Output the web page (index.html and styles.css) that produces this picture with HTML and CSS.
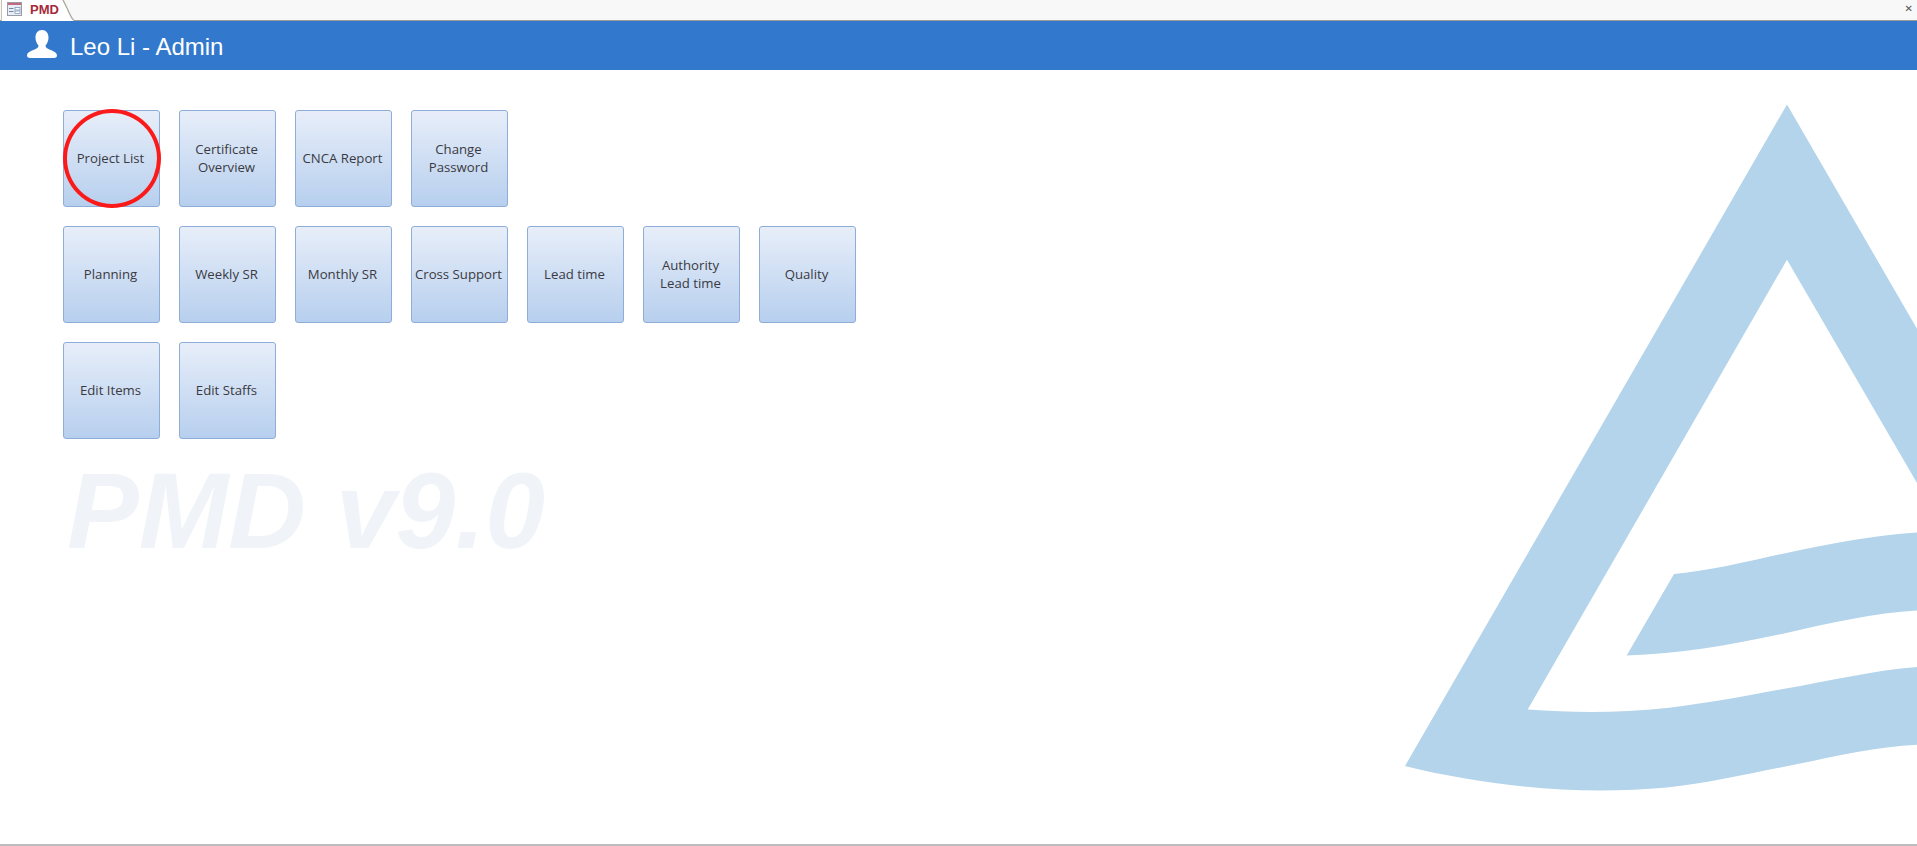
FILE: index.html
```html
<!DOCTYPE html>
<html lang="en">
<head>
<meta charset="utf-8">
<title>PMD</title>
<link rel="stylesheet" href="styles.css">
</head>
<body>
<svg class="logo" viewBox="0 0 1917 846" aria-hidden="true">
  <path d="M1787 104.500L1917 328.700V483L1787 259.700L1527.700 709.600C1575 713 1620 713 1667 708C1710 703 1750 695 1783 689C1830 681 1875 670 1917 667V744.700C1872 747 1828 758 1783 767C1745 774.600 1705 783.700 1667 787.500C1645 789.500 1622 790.500 1600 790.500C1535 790.500 1465 781 1405 766Z"/>
  <path d="M1674 574C1710 571 1750 561 1783 553.700C1830 544 1875 535 1917 532.600V610.600C1875 613 1830 623 1783 633.700C1730 645 1680 654 1626.700 655.400Z"/>
</svg>
<header class="tabbar">
  <div class="tab">
    <svg class="tab-icon" viewBox="0 0 15 14" aria-hidden="true">
      <rect x="0.500" y="0.500" width="14" height="13" fill="#e9edf4" stroke="#9a9aa8"/>
      <rect x="1" y="1" width="13" height="2" fill="#c4697f"/>
      <path d="M2 6.500H6.500M2 9.500H6.500" stroke="#7488a6" stroke-width="1"/>
      <rect x="8" y="5.500" width="5" height="2.500" fill="#fff" stroke="#7f9cc0" stroke-width="0.800"/>
      <rect x="8" y="9" width="5" height="2.500" fill="#fff" stroke="#7f9cc0" stroke-width="0.800"/>
    </svg>
    <span class="tab-label">PMD</span>
    <svg class="tab-edge" viewBox="0 0 14 21" aria-hidden="true">
      <path d="M0 0H2L6 8C8 12 10 18 13 20V21H0Z" fill="#fff"/>
      <path d="M2 0L6 8C8 12 10 18 13 20.500" fill="none" stroke="#aaa59a" stroke-width="1.300"/>
    </svg>
  </div>
  <span class="close">✕</span>
</header>
<div class="userbar">
  <svg class="user-icon" viewBox="0 0 30 28" aria-hidden="true">
    <path d="M15 0C10.800 0 8.500 3.300 8.500 7.500C8.500 11 9.800 13.500 11.500 15.500C11.500 17.500 10 18.500 7 19.800C3.500 21.200 0 22.700 0 25.500C0 27 1 28 3 28H27C29 28 30 27 30 25.500C30 22.700 26.500 21.200 23 19.800C20 18.500 18.500 17.500 18.500 15.500C20.200 13.500 21.500 11 21.500 7.500C21.500 3.300 19.200 0 15 0Z"/>
  </svg>
  <span class="user-name">Leo Li - Admin</span>
</div>
<main class="content">
  <nav class="menu">
    <div class="menu-row">
      <button class="tile tile-marked">Project List</button>
      <button class="tile">Certificate<br>Overview</button>
      <button class="tile">CNCA Report</button>
      <button class="tile">Change<br>Password</button>
    </div>
    <div class="menu-row">
      <button class="tile">Planning</button>
      <button class="tile">Weekly SR</button>
      <button class="tile">Monthly SR</button>
      <button class="tile">Cross Support</button>
      <button class="tile">Lead time</button>
      <button class="tile">Authority<br>Lead time</button>
      <button class="tile">Quality</button>
    </div>
    <div class="menu-row">
      <button class="tile">Edit Items</button>
      <button class="tile">Edit Staffs</button>
    </div>
  </nav>
  <div class="version">PMD v9.0</div>
</main>
</body>
</html>
```
FILE: styles.css
```css
html, body {
  margin: 0;
  height: 100%;
  background: #fff;
  overflow: hidden;
}
body {
  position: relative;
  display: flex;
  flex-direction: column;
  box-sizing: border-box;
  height: 846px;
  border-bottom: 2px solid #bdbdc0;
  font-family: "Open Sans", "Noto Sans", sans-serif;
}
.logo {
  position: absolute;
  left: 0;
  top: 0;
  width: 1917px;
  height: 846px;
}
.logo path { fill: #b3d4ea; }
.tabbar {
  position: relative;
  box-sizing: border-box;
  height: 21px;
  flex: none;
  display: flex;
  justify-content: space-between;
  background: #f8f8f8;
  border-bottom: 1px solid #9a9a9a;
}
.tab {
  position: relative;
  box-sizing: border-box;
  display: flex;
  align-items: center;
  width: 61px;
  height: 21px;
  margin-left: 1px;
  background: #fff;
  border-left: 1px solid #c9c2b2;
  padding: 0 0 3px 5px;
}
.tab-icon { width: 15px; height: 14px; flex: none; }
.tab-label {
  margin-left: 8px;
  font: bold 13px "Liberation Sans", sans-serif;
  color: #a52a3a;
}
.tab-edge {
  position: absolute;
  left: 59px;
  top: 0;
  width: 14px;
  height: 21px;
}
.close {
  font: bold 10px "DejaVu Sans", sans-serif;
  color: #555;
  margin: 3px 4px 0 0;
}
.userbar {
  position: relative;
  flex: none;
  height: 49px;
  display: flex;
  align-items: center;
  background: #3278cd;
  padding-left: 27px;
}
.user-icon { width: 30px; height: 28px; fill: #fff; margin-top: -3px; }
.user-name {
  margin: 3px 0 0 13px;
  font: 24px "Liberation Sans", sans-serif;
  color: #fff;
}
.content {
  position: relative;
  padding: 40px 0 0 63px;
}
.menu {
  display: flex;
  flex-direction: column;
  gap: 19px;
}
.menu-row {
  display: flex;
  gap: 19px;
}
.tile {
  position: relative;
  box-sizing: border-box;
  width: 97px;
  height: 97px;
  padding: 0 2px 2px 0;
  border: 1px solid #8eadd8;
  border-radius: 3px;
  background: linear-gradient(#e7eef9, #b7cfee);
  color: #3a3a42;
  font: 13.2px/18px "Open Sans", "Noto Sans", sans-serif;
}
.tile-marked::after {
  content: "";
  position: absolute;
  left: -1px;
  top: -2px;
  width: 98px;
  height: 99px;
  box-sizing: border-box;
  border: 4px solid #fb1a1a;
  border-radius: 50%;
}
.version {
  margin: 10px 0 0 4px;
  font: italic bold 107.5px/124px "Liberation Sans", sans-serif;
  color: #f0f4f8;
}
```
